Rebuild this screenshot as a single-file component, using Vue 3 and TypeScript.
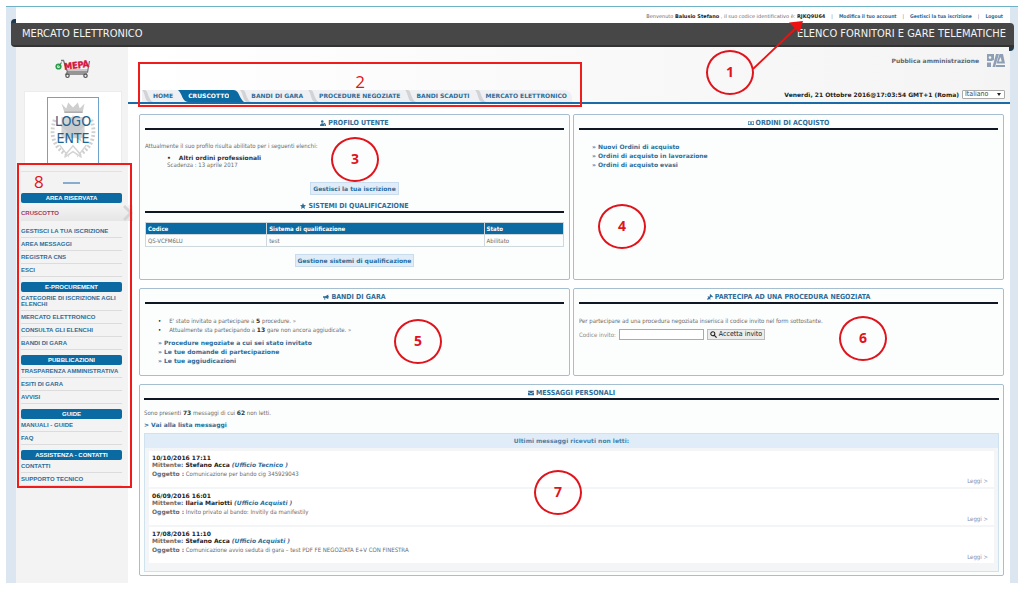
<script setup lang="ts">
interface MenuGroup {
  title: string
  current?: string
  items: string[]
}
interface Message {
  date: string
  sender: string
  office: string
  subject: string
}
interface Pin {
  n: number
  x: number
  y: number
}

const tabs: string[] = ['HOME', 'CRUSCOTTO', 'BANDI DI GARA', 'PROCEDURE NEGOZIATE', 'BANDI SCADUTI', 'MERCATO ELETTRONICO']
const activeTab = 'CRUSCOTTO'

const groups: MenuGroup[] = [
  { title: 'AREA RISERVATA', current: 'CRUSCOTTO', items: ['GESTISCI LA TUA ISCRIZIONE', 'AREA MESSAGGI', 'REGISTRA CNS', 'ESCI'] },
  { title: 'E-PROCUREMENT', items: ['CATEGORIE DI ISCRIZIONE AGLI ELENCHI', 'MERCATO ELETTRONICO', 'CONSULTA GLI ELENCHI', 'BANDI DI GARA'] },
  { title: 'PUBBLICAZIONI', items: ['TRASPARENZA AMMINISTRATIVA', 'ESITI DI GARA', 'AVVISI'] },
  { title: 'GUIDE', items: ['MANUALI - GUIDE', 'FAQ'] },
  { title: 'ASSISTENZA - CONTATTI', items: ['CONTATTI', 'SUPPORTO TECNICO'] },
]

const orderLinks: string[] = ['Nuovi Ordini di acquisto', 'Ordini di acquisto in lavorazione', 'Ordini di acquisto evasi']
const tenderLinks: string[] = ['Procedure negoziate a cui sei stato invitato', 'Le tue domande di partecipazione', 'Le tue aggiudicazioni']

const messages: Message[] = [
  { date: '10/10/2016 17:11', sender: 'Stefano Acca', office: '(Ufficio Tecnico )', subject: 'Comunicazione per bando cig 345929043' },
  { date: '06/09/2016 16:01', sender: 'Ilaria Mariotti', office: '(Ufficio Acquisti )', subject: 'Invito privato al bando: Invitily da manifestily' },
  { date: '17/08/2016 11:10', sender: 'Stefano Acca', office: '(Ufficio Acquisti )', subject: 'Comunicazione avvio seduta di gara – test PDF FE NEGOZIATA E+V CON FINESTRA' },
]

const pins: Pin[] = [
  { n: 1, x: 730, y: 72 },
  { n: 3, x: 355, y: 159 },
  { n: 4, x: 622, y: 226 },
  { n: 5, x: 418, y: 341 },
  { n: 6, x: 863, y: 338 },
  { n: 7, x: 558, y: 492 },
]
</script>

<template>
  <div class="page">
    <div class="frame">
      <div class="account">
        <span>Benvenuto <b>Balusio Stefano</b> , il suo codice identificativo è: <b>RJKQ9U64</b></span>
        <i>|</i><a href="#">Modifica il tuo account</a>
        <i>|</i><a href="#">Gestisci la tua iscrizione</a>
        <i>|</i><a href="#">Logout</a>
      </div>

      <header class="banner">
        <span>MERCATO ELETTRONICO</span>
        <span>ELENCO FORNITORI E GARE TELEMATICHE</span>
      </header>

      <div class="columns">
        <aside class="side">
          <svg class="mepa" viewBox="0 0 36 22" role="img" aria-label="MEPA">
            <path d="M6 3.500h2.500l4 11.500h20l2-11M12.500 15l-1.500 2h21" fill="none" stroke="#777" stroke-width="1.300" />
            <path d="M12 13h21" fill="none" stroke="#888" stroke-width="0.800" />
            <circle cx="12.500" cy="18.800" r="1.700" fill="#eee" stroke="#555" stroke-width="1.200" />
            <circle cx="30.500" cy="18.800" r="1.700" fill="#eee" stroke="#555" stroke-width="1.200" />
            <circle cx="3.500" cy="9.500" r="2.300" fill="#dff0e2" stroke="#2a9a4b" stroke-width="1.600" />
            <path d="M3.500 9.500l3-4" stroke="#2a9a4b" stroke-width="1.200" />
            <text x="9" y="11.500" transform="rotate(-7 20 8)" class="mepa-text">MEPA</text>
          </svg>

          <div class="logo-card">
            <div class="logo-frame">
              <svg class="emblem" viewBox="0 0 52 66" aria-hidden="true">
                <path d="M14 5l5 5 2-6 5 5 5-5 2 6 5-5-2 9H17z" fill="#cfcfcf" />
                <path d="M17 14h19" stroke="#aaa" stroke-width="1.500" />
                <rect x="14" y="19" width="24" height="22" fill="#d2d4d6" />
                <path d="M26 17l4 10h10l-8 7 3 11-9-7-9 7 3-11-8-7h10z" fill="#c8cbce" />
                <path d="M7 22C1 38 7 53 22 59M45 22c6 16 0 31-15 37" fill="none" stroke="#d0d0d0" stroke-width="4" stroke-dasharray="2 2" />
                <path d="M12 48l7 9 7-8 7 8 7-9M17 61l9-6 9 6" fill="none" stroke="#d4d4d4" stroke-width="1.500" />
              </svg>
              <span class="logo-name">LOGO<br />ENTE</span>
            </div>
          </div>
          <div class="slider"><span></span></div>

          <nav v-for="g in groups" :key="g.title" class="group" :aria-label="g.title">
            <h2>{{ g.title }}</h2>
            <a v-if="g.current" href="#" class="current">{{ g.current }}
              <svg viewBox="0 0 10 18" aria-hidden="true"><path d="M1 2l7 7-7 7" fill="none" stroke="#d5d5d5" stroke-width="3" /></svg>
            </a>
            <a v-for="i in g.items" :key="i" href="#" class="entry">{{ i }}</a>
          </nav>
        </aside>

        <main class="main">
          <div class="head">
            <div class="brand">
              <span>Pubblica amministrazione</span>
              <svg viewBox="0 0 18 13" aria-hidden="true">
                <path d="M0 0h7v6L4.500 7H0zM0 8.500h4V13H0zM9 0h3L8 13H5.500z" fill="#8e9fb5" />
                <circle cx="3" cy="3.500" r="1.300" fill="#f5f5f5" />
                <path d="M12.500 0H16l2 9.500H9.500zM9 11h9v2H8.500z" fill="#8e9fb5" />
                <path d="M13.500 3l1.200 4.500h-2.900z" fill="#f5f5f5" />
              </svg>
            </div>
            <div class="bar">
              <nav class="tabs" aria-label="Principale">
                <a v-for="t in tabs" :key="t" href="#" :class="['tab', { active: t === activeTab }]">
                  <svg v-if="t !== activeTab" class="slant" viewBox="0 0 11 12" aria-hidden="true">
                    <path d="M0 0h3c3 0 3 10 8 12H7C3 12 3 2 0 0z" fill="#d3d3d6" />
                  </svg>
                  <svg v-else class="slant" viewBox="0 0 12 12" preserveAspectRatio="none" aria-hidden="true">
                    <path d="M0 0h12v12C5 12 5 3 0 0z" fill="#0b6aa2" />
                  </svg>
                  <span>{{ t }}</span>
                  <svg v-if="t === activeTab" class="curve" viewBox="0 0 16 12" preserveAspectRatio="none" aria-hidden="true">
                    <path d="M0 0h5c6 0 6 9 11 12H0z" fill="#0b6aa2" />
                  </svg>
                </a>
              </nav>
              <div class="when">
                <b>Venerdì, 21 Ottobre 2016@17:03:54 GMT+1 (Roma)</b>
                <div class="language">
                  <select aria-label="Lingua"><option>Italiano</option></select>
                </div>
              </div>
            </div>
          </div>

          <div class="grid">
            <section class="panel profile">
              <h3>
                <svg viewBox="0 0 8 8" aria-hidden="true"><circle cx="3" cy="2" r="1.700" /><path d="M0 8c0-5 6-5 6 0zM5 3.500c2 0 3 2 3 4.500H6.500C6.500 6 6 5 4.500 4.500z" /></svg>
                PROFILO UTENTE
              </h3>
              <p>Attualmente il suo profilo risulta abilitato per i seguenti elenchi:</p>
              <ul class="lists"><li><b>Altri ordini professionali</b><br />Scadenza : 13 aprile 2017</li></ul>
              <div class="center"><a href="#" class="pill">Gestisci la tua iscrizione</a></div>
              <h3 class="second">
                <svg viewBox="0 0 8 8" aria-hidden="true"><path d="M4 0l1.200 2.700L8 3 5.900 4.900 6.500 8 4 6.400 1.500 8l.6-3.100L0 3l2.800-.3z" /></svg>
                SISTEMI DI QUALIFICAZIONE
              </h3>
              <table>
                <thead><tr><th>Codice</th><th>Sistema di qualificazione</th><th>Stato</th></tr></thead>
                <tbody><tr><td>QS-VCFM6LU</td><td>test</td><td>Abilitato</td></tr></tbody>
              </table>
              <div class="center"><a href="#" class="pill">Gestione sistemi di qualificazione</a></div>
            </section>

            <section class="panel">
              <h3>
                <svg viewBox="0 0 8 8" aria-hidden="true"><path d="M0 1.500h8v5H0zM.8 2.300v3.400h6.400V2.300z" fill-rule="evenodd" /><circle cx="4" cy="4" r="1.200" /></svg>
                ORDINI DI ACQUISTO
              </h3>
              <div class="links orders"><a v-for="l in orderLinks" :key="l" href="#">» {{ l }}</a></div>
            </section>

            <section class="panel tenders">
              <h3>
                <svg viewBox="0 0 8 8" aria-hidden="true"><path d="M0 3h3l4-2.500v6L3 5v2.500H1.800V5H0zM7.400 2.500h.6v2h-.6z" /></svg>
                BANDI DI GARA
              </h3>
              <ul class="counts">
                <li>E' stato invitato a partecipare a <b>5</b> procedure. »</li>
                <li>Attualmente sta partecipando a <b>13</b> gare non ancora aggiudicate. »</li>
              </ul>
              <div class="links"><a v-for="l in tenderLinks" :key="l" href="#">» {{ l }}</a></div>
            </section>

            <section class="panel">
              <h3>
                <svg viewBox="0 0 8 8" aria-hidden="true"><path d="M4.500 0L8 3.500 6.800 4.500 5.800 3.800 1.200 8 0 6.800 4 2.500 3.500 1.200zM1.500 2.500L5 6.500l-1 1L.8 3.800z" /></svg>
                PARTECIPA AD UNA PROCEDURA NEGOZIATA
              </h3>
              <p class="hint">Per partecipare ad una procedura negoziata inserisca il codice invito nel form sottostante.</p>
              <form class="invite" @submit.prevent>
                <label for="codice">Codice invito:</label>
                <input id="codice" type="text" />
                <button type="submit">
                  <svg viewBox="0 0 8 8" aria-hidden="true"><circle cx="3.200" cy="3.200" r="2.300" fill="none" stroke="#222" stroke-width="1.200" /><path d="M5 5l2.500 2.500" stroke="#222" stroke-width="1.400" /></svg>
                  Accetta invito
                </button>
              </form>
            </section>

            <section class="panel inbox">
              <h3>
                <svg viewBox="0 0 8 8" aria-hidden="true"><path d="M0 1h8v1L4 4.500 0 2zM0 3l4 2.500L8 3v4H0z" /></svg>
                MESSAGGI PERSONALI
              </h3>
              <p class="tally">Sono presenti <b>73</b> messaggi di cui <b>62</b> non letti.</p>
              <p class="tally"><a href="#">&gt; Vai alla lista messaggi</a></p>
              <div class="unread">
                <h4>Ultimi messaggi ricevuti non letti:</h4>
                <article v-for="m in messages" :key="m.date">
                  <b class="date">{{ m.date }}</b>
                  <div><b>Mittente: <strong>{{ m.sender }}</strong> <em>{{ m.office }}</em></b></div>
                  <div class="subject"><b>Oggetto :</b> {{ m.subject }}</div>
                  <a href="#" class="read">Leggi &gt;</a>
                </article>
              </div>
            </section>
          </div>
        </main>
      </div>
    </div>

    <div class="notes">
      <div class="box box-tabs"><span>2</span></div>
      <div class="box box-menu"><span>8</span></div>
      <svg class="arrow" viewBox="0 0 54 52" aria-hidden="true">
        <path d="M1 49L44 8" stroke="#ee1111" stroke-width="1.800" />
        <path d="M51 1L47.500 13 37 2.500z" fill="#ee1111" />
      </svg>
      <div v-for="p in pins" :key="p.n" class="pin" :style="{ left: p.x + 'px', top: p.y + 'px' }">{{ p.n }}</div>
    </div>
  </div>
</template>

<style>
body {
  margin: 0;
  background: #fff;
}
</style>

<style scoped>
.page {
  --blue: #0b6aa2;
  --ink: #2e6d98;
  --text: #6a6a6a;
  position: relative;
  padding: 6px 6px 8px;
  font: 6px/9px "DejaVu Sans Condensed", "DejaVu Sans", Verdana, sans-serif;
  color: var(--text);
}
.page *, .page {
  box-sizing: border-box;
}
a {
  color: var(--ink);
  text-decoration: none;
}
h2, h3, h4, p, ul {
  margin: 0;
  padding: 0;
}
b, strong, .links a, .tally a, .pill, h4, .tab {
  font-family: "DejaVu Sans", Verdana, sans-serif;
  font-weight: bold;
}
.frame {
  border-top: 1px solid #6fb2c6;
  background: linear-gradient(90deg, #dbe6f0 10px, #fff 10px, #fff calc(100% - 8px), #dbe6f0 calc(100% - 8px));
}
.account {
  display: flex;
  justify-content: flex-end;
  align-items: center;
  gap: 6px;
  height: 16px;
  padding: 2px 15px 0 0;
  font-size: 5px;
  white-space: nowrap;
}
.account span {
  font-family: "DejaVu Sans", Verdana, sans-serif;
}
.account b {
  color: #222;
}
.account a {
  font-weight: bold;
}
.account i {
  font-style: normal;
}
.banner {
  position: relative;
  display: flex;
  justify-content: space-between;
  align-items: center;
  height: 24px;
  margin: 0 4px 0 5px;
  padding: 0 8px 0 11px;
  border-bottom: 2px solid #333;
  border-radius: 0 4px 0 4px;
  background: #474747;
  color: #f4f4f4;
  font-size: 11px;
  line-height: 14px;
}
.banner::before, .banner::after {
  content: "";
  position: absolute;
  width: 5px;
  height: 4px;
  background: #1f3a4c;
}
.banner::before {
  left: 0;
  top: -4px;
  border-radius: 4px 0 0 0;
}
.banner::after {
  right: 0;
  bottom: -6px;
  border-radius: 0 0 4px 0;
}
.columns {
  display: flex;
  margin: 0 8px 0 10px;
}
.side {
  flex: 0 0 112px;
  display: flex;
  flex-direction: column;
  padding: 10px 6px 0 5px;
  background: #f3f3f3;
}
.mepa {
  width: 36px;
  height: 22px;
  margin-left: 34px;
}
.mepa-text {
  font: bold 9px "DejaVu Sans Condensed", sans-serif;
  fill: #d3163c;
  stroke: #d3163c;
  stroke-width: 0.4px;
}
.logo-card {
  margin: 12px 0 7px 3px;
  height: 73px;
  padding-top: 5px;
  border: 1px solid #ececec;
  border-bottom: 0;
  background: #fff;
}
.logo-frame {
  display: grid;
  width: 52px;
  height: 67px;
  margin: 0 auto;
  border: 1px solid #6fa3cc;
  border-bottom: 0;
}
.emblem, .logo-name {
  grid-area: 1 / 1;
}
.emblem {
  width: 50px;
  height: 65px;
}
.logo-name {
  z-index: 1;
  padding-top: 15px;
  color: #1f6391;
  font-size: 14px;
  line-height: 17px;
  text-align: center;
}
.slider {
  display: flex;
  justify-content: center;
  height: 17px;
  padding-top: 10px;
  border-top: 1px solid #e2e2e2;
}
.slider span {
  width: 17px;
  height: 2px;
  background: #88abcf;
}
.group {
  margin-top: 5px;
  font-family: "Liberation Sans", Arial, sans-serif;
}
.group h2 {
  height: 10px;
  border-radius: 2px;
  background: var(--blue);
  color: #fff;
  font-size: 6px;
  line-height: 10px;
  text-align: center;
}
.entry, .current {
  display: block;
  line-height: 6px;
  padding: 3px 0;
  border-bottom: 1px solid #dcdcdc;
  font-weight: bold;
}
.current {
  display: flex;
  justify-content: space-between;
  align-items: center;
  height: 16px;
  margin: 2px -11px 4px 0;
  border: 0;
  background: linear-gradient(#f3f3f3, #e6e6e6);
  color: #a8385a;
}
.current svg {
  width: 10px;
  height: 18px;
}
.main {
  flex: 1;
  min-width: 0;
}
.head {
  display: flex;
  flex-direction: column;
  justify-content: space-between;
  height: 57px;
  padding: 7px 5px 0 14px;
  border-bottom: 2px solid #1b6ba8;
  background: linear-gradient(90deg, #fff, #f4f4f4);
}
.brand {
  display: flex;
  justify-content: flex-end;
  align-items: center;
  gap: 8px;
  font: bold 6px/13px "DejaVu Sans", sans-serif;
  color: #64666c;
}
.brand svg {
  width: 18px;
  height: 13px;
}
.bar {
  display: flex;
  justify-content: space-between;
  align-items: flex-end;
  white-space: nowrap;
}
.tabs {
  display: flex;
  border-radius: 0 8px 0 0;
  background: #eef0f3;
}
.tab {
  display: flex;
  align-items: stretch;
  height: 12px;
  line-height: 12px;
  padding-right: 5px;
}
.tab.active {
  color: #fff;
  padding: 0;
}
.tab.active span {
  background: var(--blue);
}
.tab.active + .tab {
  margin-left: -4px;
}
.slant {
  width: 11px;
  height: 12px;
}
.tab.active .slant {
  width: 10px;
}
.curve {
  width: 15px;
  height: 12px;
}
.when {
  display: flex;
  align-items: center;
  gap: 3px;
  padding-bottom: 3px;
  color: #222;
}
.language {
  position: relative;
  display: flex;
}
.language::after {
  content: "";
  position: absolute;
  right: 4px;
  top: 3px;
  border: 2px solid transparent;
  border-top: 3px solid #222;
  border-bottom: 0;
}
select {
  width: 43px;
  height: 9px;
  padding: 0 2px;
  appearance: none;
  border: 1px solid #aaa;
  border-radius: 1px;
  background: #fff;
  color: #444;
  font: 7px/7px "DejaVu Sans Condensed", sans-serif;
}
.grid {
  display: grid;
  grid-template-columns: 1fr 1fr;
  gap: 8px 3px;
  padding: 10px 6px 7px 11px;
}
.panel {
  padding: 3px 5px;
  border: 1px solid #a5bfd0;
  border-radius: 2px;
  background: #fcfefe;
}
h3 {
  display: flex;
  justify-content: center;
  align-items: center;
  gap: 2px;
  height: 12px;
  padding-bottom: 1px;
  border-bottom: 2px solid #111722;
  color: var(--ink);
  font-size: 7px;
  line-height: 8px;
}
h3 svg {
  width: 6px;
  height: 6px;
  fill: currentColor;
}
.profile {
  height: 166px;
}
.profile p {
  margin-top: 11px;
}
.lists {
  margin: 4px 0 14px 22px;
  list-style: none;
  line-height: 7px;
}
.lists b {
  color: #333;
}
.lists b::before {
  content: "•";
  margin-right: 8px;
}
.center {
  display: flex;
  justify-content: center;
}
.pill {
  height: 13px;
  padding: 0 2px;
  border: 1px solid #c9ddee;
  background: #e0edf9;
  line-height: 11px;
}
.second {
  margin-top: 6px;
}
table {
  width: 100%;
  margin: 9px 0 7px;
  border-collapse: collapse;
  table-layout: fixed;
}
th, td {
  height: 12px;
  padding: 0 2px;
  border: 1px solid #cfd8dd;
  text-align: left;
}
th {
  background: var(--blue);
  color: #fff;
}
th:nth-child(1) {
  width: 29%;
}
th:nth-child(3) {
  width: 19%;
}
.links {
  display: flex;
  flex-direction: column;
  align-items: flex-start;
  margin: 4px 0 0 13px;
}
.links a {
  line-height: 9px;
}
.orders {
  margin-top: 12px;
}
.tenders {
  height: 88px;
}
.counts {
  margin: 12px 0 0 13px;
  list-style: none;
  line-height: 9px;
}
.counts li::before {
  content: "•";
  margin-right: 8px;
  color: #222;
}
.counts b, .tally b {
  color: #333;
}
.hint {
  margin-top: 12px;
}
.invite {
  display: flex;
  align-items: center;
  gap: 3px;
  margin-top: 4px;
}
.invite label {
  color: #8b8b8b;
}
.invite input {
  width: 85px;
  height: 11px;
  padding: 0 2px;
  border: 1px solid #aaa;
  background: #fff;
  font-size: 6px;
}
.invite button {
  display: flex;
  align-items: center;
  gap: 2px;
  height: 11px;
  padding: 0 2px;
  border: 1px solid #bbb;
  background: #ececec;
  color: #222;
  font: 7px/9px "DejaVu Sans Condensed", sans-serif;
}
.invite button svg {
  width: 7px;
  height: 7px;
}
.inbox {
  grid-column: 1 / -1;
  padding: 3px 4px;
}
.tally {
  margin-top: 8px;
}
.tally + .tally {
  margin-top: 3px;
}
.unread {
  margin-top: 4px;
  padding-bottom: 6px;
  border: 1px solid #cfe2ee;
  background: #f4f5f6;
}
h4 {
  margin-bottom: 3px;
  background: #e0edf9;
  color: #4b81a8;
  font-size: 6px;
  line-height: 14px;
  text-align: center;
}
article {
  position: relative;
  height: 36px;
  margin: 0 4px 2px;
  padding: 3px;
  background: #fff;
  line-height: 7px;
}
article strong, .date {
  color: #222;
}
article em {
  color: var(--ink);
}
.subject {
  margin-top: 2px;
}
.read {
  position: absolute;
  right: 6px;
  bottom: 3px;
  color: #7d8cb5;
}
.notes {
  position: absolute;
  inset: 0;
  pointer-events: none;
  color: #e0141c;
  font-family: "Open Sans", sans-serif;
}
.box {
  position: absolute;
  border: 2px solid #ee1c1c;
  font-size: 17px;
  line-height: 20px;
}
.box-tabs {
  left: 138px;
  top: 62px;
  width: 444px;
  height: 45px;
  padding-top: 8px;
  text-align: center;
}
.box-menu {
  left: 17px;
  top: 163px;
  width: 115px;
  height: 325px;
  padding: 7px 15px;
}
.arrow {
  position: absolute;
  left: 752px;
  top: 20px;
  width: 54px;
  height: 52px;
}
.pin {
  position: absolute;
  width: 48px;
  height: 45px;
  margin: -22px 0 0 -24px;
  border: 2px solid #e0141c;
  border-radius: 50%;
  font-size: 14px;
  font-weight: bold;
  line-height: 40px;
  text-align: center;
}
</style>
